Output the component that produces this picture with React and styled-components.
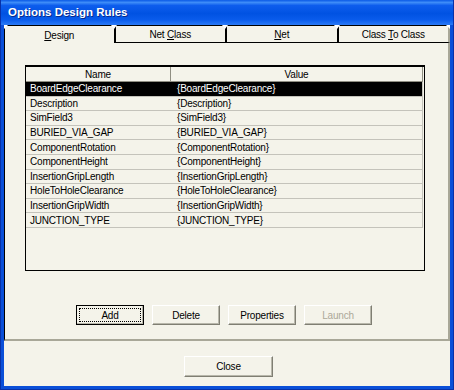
import styled, { createGlobalStyle } from "styled-components";

const GlobalStyle = createGlobalStyle`
  html, body {
    margin: 0;
    padding: 0;
    background: #ffffff;
  }
  body {
    font-family: "Liberation Sans", Arial, sans-serif;
    font-size: 10px;
    letter-spacing: -0.2px;
    color: #000;
  }
`;

const rules = [
  ["BoardEdgeClearance", "{BoardEdgeClearance}"],
  ["Description", "{Description}"],
  ["SimField3", "{SimField3}"],
  ["BURIED_VIA_GAP", "{BURIED_VIA_GAP}"],
  ["ComponentRotation", "{ComponentRotation}"],
  ["ComponentHeight", "{ComponentHeight}"],
  ["InsertionGripLength", "{InsertionGripLength}"],
  ["HoleToHoleClearance", "{HoleToHoleClearance}"],
  ["InsertionGripWidth", "{InsertionGripWidth}"],
  ["JUNCTION_TYPE", "{JUNCTION_TYPE}"],
];

const Window = styled.div`
  width: 454px;
  height: 390px;
  box-sizing: border-box;
  display: flex;
  flex-direction: column;
  background: #0a4fd8;
  padding: 0 3px 3px 3px;
  border-left: 1px solid #0831a8;
  border-right: 1px solid #0831a8;
  border-bottom: 1px solid #0831a8;
`;

const TitleBar = styled.div`
  height: 25px;
  margin: 0 -3px;
  padding-left: 7px;
  padding-bottom: 1px;
  box-sizing: border-box;
  display: flex;
  align-items: center;
  background: linear-gradient(
    to bottom,
    #0a5ae6 0%,
    #3d8cf8 10%,
    #0d5ded 22%,
    #0052e2 55%,
    #0a5cec 80%,
    #2a7af6 100%
  );
  color: #fff;
  font-family: "Liberation Sans", Arial, sans-serif;
  font-weight: bold;
  font-size: 11.5px;
  letter-spacing: 0;
  text-shadow: 1px 1px 0 #0a2a8a;
`;

const Client = styled.div`
  flex: 1;
  display: flex;
  flex-direction: column;
  background: #f4f3ea;
`;

const TabStrip = styled.div`
  display: grid;
  grid-template-columns: repeat(4, 1fr);
  height: 18px;
`;

const Tab = styled.div`
  position: relative;
  box-sizing: border-box;
  display: flex;
  align-items: center;
  justify-content: center;
  border-top: 1px solid #000;
  border-left: ${(p) => (p.$first ? "1px solid #000" : "none")};
  border-right: ${(p) => (p.$last ? "2px solid #a8a798" : "2px solid #000")};
  border-bottom: ${(p) => (p.$active ? "none" : "1px solid #000")};
  padding-top: 1px;
  color: #000;

  &::before {
    content: "";
    position: absolute;
    top: -1px;
    left: ${(p) => (p.$first ? "-1px" : "-5px")};
    border-top: 4px solid #ffffff;
    border-left: ${(p) => (p.$first ? "0" : "3px solid transparent")};
    border-right: ${(p) => (p.$first ? "4px solid transparent" : "3px solid transparent")};
  }

  &::after {
    content: "";
    display: ${(p) => (p.$last ? "block" : "none")};
    position: absolute;
    top: -1px;
    right: -2px;
    border-top: 4px solid #ffffff;
    border-left: 4px solid transparent;
  }
`;

const Panel = styled.div`
  height: 298px;
  box-sizing: border-box;
  display: flex;
  flex-direction: column;
  border-left: 1px solid #000;
  border-right: 2px solid #a8a798;
  border-bottom: 2px solid #a8a798;
  padding: 22px 23px 0 20px;
`;

const ListBox = styled.div`
  height: 206px;
  box-sizing: border-box;
  border: 1px solid #000;
  border-top-width: 2px;
  background: #f4f3ea;
  overflow: hidden;
`;

const Grid = styled.div`
  display: grid;
  grid-template-columns: 145px 1fr;
  margin-right: 1px;
`;

const HeadCell = styled.div`
  height: 15px;
  box-sizing: border-box;
  display: flex;
  align-items: center;
  justify-content: center;
  border-right: 1px solid #8f8e82;
  border-bottom: 1px solid #8f8e82;
  background: #f4f3ea;
`;

const Cell = styled.div`
  height: 14.6px;
  box-sizing: border-box;
  display: flex;
  align-items: center;
  padding-left: ${(p) => (p.$value ? "6px" : "4px")};
  white-space: nowrap;
  overflow: hidden;
  border-bottom: 1px solid #c4c3bb;
  background: ${(p) => (p.$selected ? "#000" : "transparent")};
  color: ${(p) => (p.$selected ? "#fff" : "#000")};
  border-right: ${(p) => (p.$value ? "1px solid #c4c3bb" : "none")};
`;

const ButtonRow = styled.div`
  display: flex;
  justify-content: center;
  gap: 8px;
  margin-top: 34px;
  padding-right: 2px;
`;

const Button = styled.button`
  position: relative;
  width: ${(p) => p.$w || 68}px;
  height: ${(p) => p.$h || 20}px;
  box-sizing: border-box;
  padding: 0;
  font-family: "Liberation Sans", Arial, sans-serif;
  font-size: 10px;
  letter-spacing: -0.2px;
  background: #f4f3ea;
  color: ${(p) => (p.disabled ? "#aca899" : "#000")};
  border: 1px solid;
  border-color: ${(p) => (p.$default ? "#000" : "#ffffff #7f7e73 #7f7e73 #ffffff")};
  box-shadow: inset -1px -1px 0 #b8b7ab;

  &::after {
    content: "";
    display: ${(p) => (p.$default ? "block" : "none")};
    position: absolute;
    inset: 2px;
    border: 1px dotted #000;
  }
`;

const Footer = styled.div`
  flex: 1;
  display: flex;
  justify-content: center;
  padding-top: 15px;
  padding-left: 3px;
`;

export default function App() {
  return (
    <>
      <GlobalStyle />
      <Window>
        <TitleBar>Options Design Rules</TitleBar>
        <Client>
          <TabStrip>
            <Tab $first $active>
              <span><u>D</u>esign</span>
            </Tab>
            <Tab>
              <span>Net <u>C</u>lass</span>
            </Tab>
            <Tab>
              <span><u>N</u>et</span>
            </Tab>
            <Tab $last>
              <span>Class <u>T</u>o Class</span>
            </Tab>
          </TabStrip>
          <Panel>
            <ListBox>
              <Grid>
                <HeadCell>Name</HeadCell>
                <HeadCell>Value</HeadCell>
                {rules.map(([name, value], i) => [
                  <Cell key={name} $selected={i === 0}>{name}</Cell>,
                  <Cell key={name + "v"} $value $selected={i === 0}>{value}</Cell>,
                ])}
              </Grid>
            </ListBox>
            <ButtonRow>
              <Button $default>Add</Button>
              <Button>Delete</Button>
              <Button>Properties</Button>
              <Button disabled>Launch</Button>
            </ButtonRow>
          </Panel>
          <Footer>
            <Button $w={89} $h={21}>Close</Button>
          </Footer>
        </Client>
      </Window>
    </>
  );
}
